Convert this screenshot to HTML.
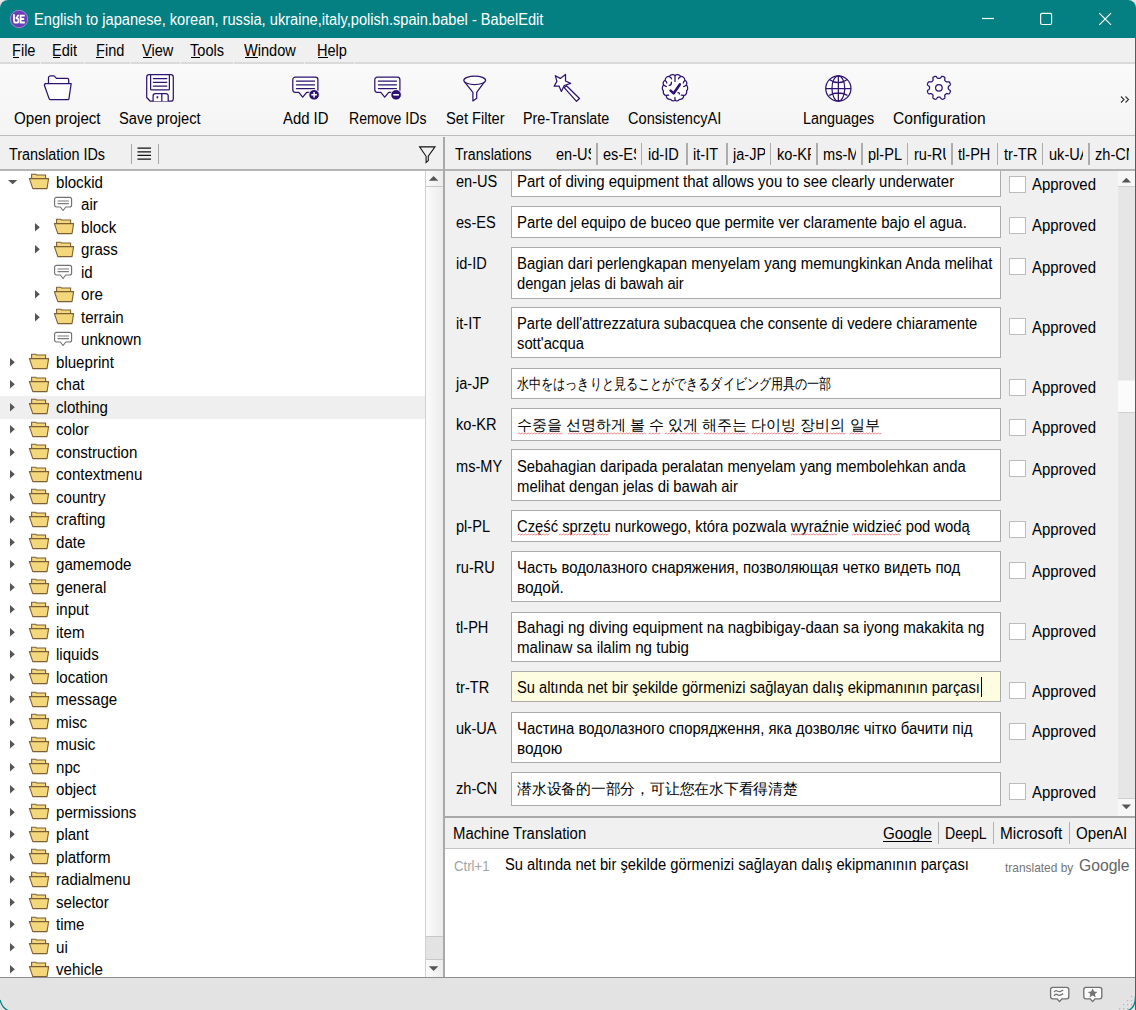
<!DOCTYPE html><html><head><meta charset="utf-8"><style>
*{box-sizing:border-box;margin:0;padding:0}
html,body{width:1136px;height:1010px;overflow:hidden;background:#e6e2e6}
body{font-family:"Liberation Sans",sans-serif;font-size:14.8px;color:#000;position:relative}
.a{position:absolute}
.t{position:absolute;white-space:nowrap;line-height:1.15}
.t{line-height:1}
#win{position:absolute;left:0;top:0;width:1136px;height:1010px;border-radius:8px 8px 0 0;overflow:hidden;background:#f0f0f0}
svg{position:absolute;overflow:visible}
</style></head><body><div id="win">
<div class="a" style="left:0;top:0;width:1136px;height:38px;background:#048083"></div>
<svg style="left:0;top:0" width="40" height="38"><circle cx="19" cy="19" r="8.7" fill="#6a3fb5" stroke="#b592e6" stroke-width="0.8"/><path d="M14 15V20.4a2.3 2.3 0 1 0 2.3-2.3M16.4 18.3L18.2 15.4" fill="none" stroke="#fff" stroke-width="1.8" stroke-linecap="round"/><path d="M24.8 15.6H20.6V22.5H24.8M20.6 19H24.2" fill="none" stroke="#fff" stroke-width="1.8"/></svg>
<div class="t" style="left:33.99px;top:12px;font-size:16px;color:#fff;transform:scaleX(0.914);transform-origin:0 0;">English to japanese, korean, russia, ukraine,italy,polish.spain.babel - BabelEdit</div>
<svg style="left:970px;top:0" width="166" height="38"><path d="M12 18.5h12" stroke="#fff" stroke-width="1.2"/><rect x="70.6" y="13.3" width="11" height="11.2" rx="1.5" fill="none" stroke="#fff" stroke-width="1.2"/><path d="M129.3 13.2l11.7 11.7M141 13.2l-11.7 11.7" stroke="#fff" stroke-width="1.2"/></svg>
<div class="a" style="left:0;top:38px;width:1136px;height:26px;background:#f0f0f0"></div>
<div class="a" style="left:0px;top:62px;width:39.5px;height:2px;background:#dadada"></div>
<div class="a" style="left:40.5px;top:62px;width:43.0px;height:2px;background:#dadada"></div>
<div class="a" style="left:84.5px;top:62px;width:45.0px;height:2px;background:#dadada"></div>
<div class="a" style="left:130.5px;top:62px;width:49.0px;height:2px;background:#dadada"></div>
<div class="a" style="left:180.5px;top:62px;width:52.0px;height:2px;background:#dadada"></div>
<div class="a" style="left:233.5px;top:62px;width:70.5px;height:2px;background:#dadada"></div>
<div class="a" style="left:305px;top:62px;width:48.5px;height:2px;background:#dadada"></div>
<div class="a" style="left:354.5px;top:62px;width:781.5px;height:2px;background:#dadada"></div>
<div class="t" style="left:12.29px;top:43px;font-size:16px;color:#000;transform:scaleX(0.91);transform-origin:0 0;">File</div>
<div class="a" style="left:13.2px;top:57.3px;width:5.8px;height:1px;background:#000"></div>
<div class="t" style="left:52.39px;top:43px;font-size:16px;color:#000;transform:scaleX(0.91);transform-origin:0 0;">Edit</div>
<div class="a" style="left:53.3px;top:57.3px;width:6.4px;height:1px;background:#000"></div>
<div class="t" style="left:95.69px;top:43px;font-size:16px;color:#000;transform:scaleX(0.91);transform-origin:0 0;">Find</div>
<div class="a" style="left:96.3px;top:57.3px;width:7.7px;height:1px;background:#000"></div>
<div class="t" style="left:141.89px;top:43px;font-size:16px;color:#000;transform:scaleX(0.91);transform-origin:0 0;">View</div>
<div class="a" style="left:142.8px;top:57.3px;width:9.7px;height:1px;background:#000"></div>
<div class="t" style="left:190.49px;top:43px;font-size:16px;color:#000;transform:scaleX(0.91);transform-origin:0 0;">Tools</div>
<div class="a" style="left:191.4px;top:57.3px;width:8.6px;height:1px;background:#000"></div>
<div class="t" style="left:244.19px;top:43px;font-size:16px;color:#000;transform:scaleX(0.91);transform-origin:0 0;">Window</div>
<div class="a" style="left:245.1px;top:57.3px;width:13.4px;height:1px;background:#000"></div>
<div class="t" style="left:317.09px;top:43px;font-size:16px;color:#000;transform:scaleX(0.91);transform-origin:0 0;">Help</div>
<div class="a" style="left:318px;top:57.3px;width:9.5px;height:1px;background:#000"></div>
<div class="a" style="left:0;top:64px;width:1136px;height:71px;background:linear-gradient(#fafafa,#f4f4f4)"></div>
<div class="a" style="left:0;top:135px;width:1136px;height:1px;background:#bdbdbd"></div>
<svg style="left:0px;top:0px" width="1136" height="1010" viewBox="0 0 1136 1010"><g transform="translate(40,70)" fill="#fff" stroke="#2e1270" stroke-width="1.25" stroke-linejoin="round"><path d="M8.5 13.5V7.8a2.2 2.2 0 0 1 2.2-2h3.4l2.4 2.6h10.8a1.4 1.4 0 0 1 1.4 1.4v3.7"/><path d="M4.4 15.2a1.6 1.6 0 0 1 1.6-1.7h25.2l-2.3 15.4a0.9 0.9 0 0 1-0.9 0.8H10.6a1.6 1.6 0 0 1-1.5-1.1z"/></g><g transform="translate(140,70)" fill="#fff" stroke="#2e1270" stroke-width="1.25" stroke-linejoin="round"><path d="M9.2 4.6H30.8a2.5 2.5 0 0 1 2.5 2.5V28.7a2.5 2.5 0 0 1-2.5 2.5H10.3L6.7 27.5V7.1a2.5 2.5 0 0 1 2.5-2.5z"/><path d="M10.6 4.6H29.4V19.3a0.5 0.5 0 0 1-0.5 0.5H11.1a0.5 0.5 0 0 1-0.5-0.5z"/><path d="M13.4 8.5H26.8M13.4 12.3H26.8M13.4 16.2H26.8" stroke-linecap="round"/><path d="M13.1 31.2V25.8a2.2 2.2 0 0 1 2.2-2.2H26a2.2 2.2 0 0 1 2.2 2.2V31.2M21.8 23.6V31.2"/><rect x="16.6" y="26.2" width="1.6" height="2.2" fill="#2e1270" stroke="none"/></g><g transform="translate(288,72)" fill="#fff" stroke="#2e1270" stroke-width="1.25" stroke-linejoin="round"><path d="M7.3 5.2H27.4a2.5 2.5 0 0 1 2.5 2.5V17.8a2.5 2.5 0 0 1-2.5 2.5H18.7L14.7 25.2L10.8 20.3H7.3a2.5 2.5 0 0 1-2.5-2.5V7.7a2.5 2.5 0 0 1 2.5-2.5z"/><path d="M8.4 9.2H26.5M8.4 12.8H26.5M8.4 16.5H26.5" stroke-linecap="round"/><circle cx="26.1" cy="22.8" r="5.3" fill="#2e1270" stroke="#fff" stroke-width="0.9"/><path d="M26.1 20v5.6M23.3 22.8h5.6" stroke="#fff" stroke-width="1.5"/></g><g transform="translate(370,72)" fill="#fff" stroke="#2e1270" stroke-width="1.25" stroke-linejoin="round"><path d="M7.3 5.2H27.4a2.5 2.5 0 0 1 2.5 2.5V17.8a2.5 2.5 0 0 1-2.5 2.5H18.7L14.7 25.2L10.8 20.3H7.3a2.5 2.5 0 0 1-2.5-2.5V7.7a2.5 2.5 0 0 1 2.5-2.5z"/><path d="M8.4 9.2H26.5M8.4 12.8H26.5M8.4 16.5H26.5" stroke-linecap="round"/><circle cx="26.1" cy="22.8" r="5.3" fill="#2e1270" stroke="#fff" stroke-width="0.9"/><path d="M23.3 22.8h5.6" stroke="#fff" stroke-width="1.6"/></g><g transform="translate(458,70)" fill="#fff" stroke="#2e1270" stroke-width="1.25" stroke-linejoin="round"><path d="M6.2 11.4L14.9 22.4V30.9L18.7 28.2V22.4L26.6 11.6"/><ellipse cx="16.7" cy="10.3" rx="10.9" ry="4.2"/></g><g transform="translate(548,70)" fill="#fff" stroke="#2e1270" stroke-width="1.25" stroke-linejoin="round"><path d="M16.2 17.6L18.5 15.7L31.5 28.5L28.5 31.3Z"/><path d="M7.3 5.7 L12.3 8.4 L17.5 4.45 L17.5 11 L22.6 13.4 L16.2 15.5 L13.4 21.4 L11 16 L6.1 16.2 L8.9 11.4Z"/></g><g transform="translate(657,70)" fill="#fff" stroke="#2e1270" stroke-width="1.25" stroke-linejoin="round" stroke-linecap="round"><path d="M18 5.6C16.5 4 13.6 4.2 12.4 6.4C10 6.2 8.2 8 8.2 10.2C6.4 11 5.9 13.2 6.6 15C5 16.4 4.9 19.4 6.4 20.8C6 23.2 7.3 25 9.2 25.6C9.6 28.2 11.6 29.6 13.6 29.4C14.8 31.4 17 31.4 18 30C19 31.4 21.2 31.4 22.4 29.4C24.4 29.6 26.4 28.2 26.8 25.6C28.7 25 30 23.2 29.6 20.8C31.1 19.4 31 16.4 29.4 15C30.1 13.2 29.6 11 27.8 10.2C27.8 8 26 6.2 23.6 6.4C22.4 4.2 19.5 4 18 5.6Z"/><path d="M18 6V11.5M18 27.4V29.6M12.6 6.8C13.6 7.2 14.4 8 14.6 8.8M23.4 6.8C22.4 7.2 21.6 8 21.4 8.8M8.2 10.4C9 11 9.6 12 9.8 13M27.8 10.4C27 11 26.4 12 26.2 13M14.4 12.2C14.6 14 13.8 15.2 12.2 15.4M6.6 15C7.8 16 8.8 16.6 9.4 16.6M29.4 15C28.2 16 27.2 16.6 26.6 16.6M9.4 25.4C10.2 25 11 25 11.8 25M26.6 25.4C25.8 25 25 25 24.2 25M21 22.6C22 22.4 22.6 23 22.4 24"/><path d="M13.6 20.6L16.6 23.4L22.8 14.4" stroke-width="2.6"/></g><g transform="translate(820,70)" fill="none" stroke="#2e1270" stroke-width="1.25"><circle cx="18.35" cy="18.5" r="12.6" fill="#fff"/><ellipse cx="18.35" cy="18.5" rx="6.4" ry="12.6"/><path d="M18.35 5.9V31.1M5.75 18.5H30.95M9.4 9.4Q18.35 16 27.3 9.4M9.2 25.4Q18.35 20.6 27.5 25.4"/></g><g transform="translate(920,70)" fill="#fff" stroke="#2e1270" stroke-width="1.25"><path d="M18.90 8.45 L19.14 8.45 L19.39 8.45 L19.64 8.44 L19.89 8.40 L20.15 8.29 L20.45 8.04 L20.79 7.59 L21.19 7.03 L21.59 6.60 L21.96 6.39 L22.29 6.35 L22.61 6.38 L22.92 6.46 L23.22 6.55 L23.51 6.67 L23.80 6.79 L24.08 6.94 L24.35 7.10 L24.60 7.30 L24.80 7.57 L24.92 7.98 L24.90 8.56 L24.78 9.24 L24.71 9.81 L24.74 10.19 L24.85 10.45 L25.00 10.66 L25.17 10.84 L25.34 11.02 L25.51 11.19 L25.68 11.36 L25.86 11.53 L26.04 11.70 L26.25 11.85 L26.51 11.96 L26.89 11.99 L27.46 11.92 L28.14 11.80 L28.72 11.78 L29.13 11.90 L29.40 12.10 L29.60 12.35 L29.76 12.62 L29.91 12.90 L30.03 13.19 L30.15 13.48 L30.24 13.78 L30.32 14.09 L30.35 14.41 L30.31 14.74 L30.10 15.11 L29.67 15.51 L29.11 15.91 L28.66 16.25 L28.41 16.55 L28.30 16.81 L28.26 17.06 L28.25 17.31 L28.25 17.56 L28.25 17.80 L28.25 18.04 L28.25 18.29 L28.26 18.54 L28.30 18.79 L28.41 19.05 L28.66 19.35 L29.11 19.69 L29.67 20.09 L30.10 20.49 L30.31 20.86 L30.35 21.19 L30.32 21.51 L30.24 21.82 L30.15 22.12 L30.03 22.41 L29.91 22.70 L29.76 22.98 L29.60 23.25 L29.40 23.50 L29.13 23.70 L28.72 23.82 L28.14 23.80 L27.46 23.68 L26.89 23.61 L26.51 23.64 L26.25 23.75 L26.04 23.90 L25.86 24.07 L25.68 24.24 L25.51 24.41 L25.34 24.58 L25.17 24.76 L25.00 24.94 L24.85 25.15 L24.74 25.41 L24.71 25.79 L24.78 26.36 L24.90 27.04 L24.92 27.62 L24.80 28.03 L24.60 28.30 L24.35 28.50 L24.08 28.66 L23.80 28.81 L23.51 28.93 L23.22 29.05 L22.92 29.14 L22.61 29.22 L22.29 29.25 L21.96 29.21 L21.59 29.00 L21.19 28.57 L20.79 28.01 L20.45 27.56 L20.15 27.31 L19.89 27.20 L19.64 27.16 L19.39 27.15 L19.14 27.15 L18.90 27.15 L18.66 27.15 L18.41 27.15 L18.16 27.16 L17.91 27.20 L17.65 27.31 L17.35 27.56 L17.01 28.01 L16.61 28.57 L16.21 29.00 L15.84 29.21 L15.51 29.25 L15.19 29.22 L14.88 29.14 L14.58 29.05 L14.29 28.93 L14.00 28.81 L13.72 28.66 L13.45 28.50 L13.20 28.30 L13.00 28.03 L12.88 27.62 L12.90 27.04 L13.02 26.36 L13.09 25.79 L13.06 25.41 L12.95 25.15 L12.80 24.94 L12.63 24.76 L12.46 24.58 L12.29 24.41 L12.12 24.24 L11.94 24.07 L11.76 23.90 L11.55 23.75 L11.29 23.64 L10.91 23.61 L10.34 23.68 L9.66 23.80 L9.08 23.82 L8.67 23.70 L8.40 23.50 L8.20 23.25 L8.04 22.98 L7.89 22.70 L7.77 22.41 L7.65 22.12 L7.56 21.82 L7.48 21.51 L7.45 21.19 L7.49 20.86 L7.70 20.49 L8.13 20.09 L8.69 19.69 L9.14 19.35 L9.39 19.05 L9.50 18.79 L9.54 18.54 L9.55 18.29 L9.55 18.04 L9.55 17.80 L9.55 17.56 L9.55 17.31 L9.54 17.06 L9.50 16.81 L9.39 16.55 L9.14 16.25 L8.69 15.91 L8.13 15.51 L7.70 15.11 L7.49 14.74 L7.45 14.41 L7.48 14.09 L7.56 13.78 L7.65 13.48 L7.77 13.19 L7.89 12.90 L8.04 12.62 L8.20 12.35 L8.40 12.10 L8.67 11.90 L9.08 11.78 L9.66 11.80 L10.34 11.92 L10.91 11.99 L11.29 11.96 L11.55 11.85 L11.76 11.70 L11.94 11.53 L12.12 11.36 L12.29 11.19 L12.46 11.02 L12.63 10.84 L12.80 10.66 L12.95 10.45 L13.06 10.19 L13.09 9.81 L13.02 9.24 L12.90 8.56 L12.88 7.98 L13.00 7.57 L13.20 7.30 L13.45 7.10 L13.72 6.94 L14.00 6.79 L14.29 6.67 L14.58 6.55 L14.88 6.46 L15.19 6.38 L15.51 6.35 L15.84 6.39 L16.21 6.60 L16.61 7.03 L17.01 7.59 L17.35 8.04 L17.65 8.29 L17.91 8.40 L18.16 8.44 L18.41 8.45 L18.66 8.45 L18.90 8.45Z"/><circle cx="18.9" cy="17.8" r="3.3"/></g><path d="M1121 96.5l3 3-3 3M1125.5 96.5l3 3-3 3" fill="none" stroke="#333" stroke-width="1.1"/></svg>
<div class="t" style="left:13.55px;top:111px;font-size:16px;color:#000;transform:scaleX(0.945);transform-origin:0 0;">Open project</div>
<div class="t" style="left:119.08px;top:111px;font-size:16px;color:#000;transform:scaleX(0.917);transform-origin:0 0;">Save project</div>
<div class="t" style="left:283.37px;top:111px;font-size:16px;color:#000;transform:scaleX(0.93);transform-origin:0 0;">Add ID</div>
<div class="t" style="left:348.92px;top:111px;font-size:16px;color:#000;transform:scaleX(0.88);transform-origin:0 0;">Remove IDs</div>
<div class="t" style="left:445.69px;top:111px;font-size:16px;color:#000;transform:scaleX(0.914);transform-origin:0 0;">Set Filter</div>
<div class="t" style="left:523.11px;top:111px;font-size:16px;color:#000;transform:scaleX(0.895);transform-origin:0 0;">Pre-Translate</div>
<div class="t" style="left:627.89px;top:111px;font-size:16px;color:#000;transform:scaleX(0.912);transform-origin:0 0;">ConsistencyAI</div>
<div class="t" style="left:803.10px;top:111px;font-size:16px;color:#000;transform:scaleX(0.9);transform-origin:0 0;">Languages</div>
<div class="t" style="left:893.03px;top:111px;font-size:16px;color:#000;transform:scaleX(0.973);transform-origin:0 0;">Configuration</div>
<div class="a" style="left:0;top:136px;width:1136px;height:34px;background:#f0f0f0"></div>
<div class="t" style="left:9.10px;top:147px;font-size:16px;color:#000;transform:scaleX(0.897);transform-origin:0 0;">Translation IDs</div>
<div class="a" style="left:131px;top:144px;width:1px;height:20px;background:#a8a8a8"></div>
<div class="a" style="left:158px;top:144px;width:1px;height:20px;background:#a8a8a8"></div>
<svg style="left:0px;top:0px" width="1136" height="1010" viewBox="0 0 1136 1010"><path d="M137.5 148.2h13.5M137.5 151.8h13.5M137.5 155.4h13.5M137.5 159.2h13.5" stroke="#111" stroke-width="1.2"/><path d="M419.6 146.9H435L428.3 156.3V160.6L426.1 162.5V156.3Z" fill="none" stroke="#111" stroke-width="1.1" stroke-linejoin="miter"/></svg>
<div class="a" style="left:0;top:169px;width:444px;height:2px;background:#b4b4b4"></div>
<div class="a" style="left:0;top:171px;width:426px;height:806px;background:#fff;overflow:hidden" id="tree">
<svg style="left:7.8px;top:8.5px" width="10" height="5"><path d="M0 0H9.3L4.65 4.2Z" fill="#555"/></svg>
<svg style="left:29px;top:2.2px" width="22" height="18" viewBox="0 0 22 18"><path d="M2.6 6V1.2H6.6L7.4 2H16.6V6" fill="#f4d77b" stroke="#7d5f36" stroke-width="1.1"/><path d="M0.4 5.6H19.6L18 15.6H3.8Z" fill="#f4d77b" stroke="#7d5f36" stroke-width="1.1" stroke-linejoin="round"/></svg>
<div class="t" style="left:55.96px;top:4px;font-size:16px;color:#000;transform:scaleX(0.942);transform-origin:0 0;">blockid</div>
<svg style="left:54px;top:25.0px" width="22" height="18" viewBox="0 0 22 18"><path d="M2.6 1.3H15.6a2 2 0 0 1 2 2V9a2 2 0 0 1-2 2H11.8L9.1 14.5L6.3 11H2.6a2 2 0 0 1-2-2V3.3a2 2 0 0 1 2-2Z" fill="#fff" stroke="#727272" stroke-width="1.15" stroke-linejoin="round"/><path d="M3.9 5.05H14.5M3.9 7.6H14.5" stroke="#7a7a7a" stroke-width="1.1" stroke-linecap="round"/></svg>
<div class="t" style="left:80.56px;top:26px;font-size:16px;color:#000;transform:scaleX(0.942);transform-origin:0 0;">air</div>
<svg style="left:35px;top:51.5px" width="6" height="9"><path d="M0 0L4.8 4.2L0 8.4Z" fill="#555"/></svg>
<svg style="left:54px;top:47.2px" width="22" height="18" viewBox="0 0 22 18"><path d="M2.6 6V1.2H6.6L7.4 2H16.6V6" fill="#f4d77b" stroke="#7d5f36" stroke-width="1.1"/><path d="M0.4 5.6H19.6L18 15.6H3.8Z" fill="#f4d77b" stroke="#7d5f36" stroke-width="1.1" stroke-linejoin="round"/></svg>
<div class="t" style="left:80.56px;top:49px;font-size:16px;color:#000;transform:scaleX(0.942);transform-origin:0 0;">block</div>
<svg style="left:35px;top:74.0px" width="6" height="9"><path d="M0 0L4.8 4.2L0 8.4Z" fill="#555"/></svg>
<svg style="left:54px;top:69.7px" width="22" height="18" viewBox="0 0 22 18"><path d="M2.6 6V1.2H6.6L7.4 2H16.6V6" fill="#f4d77b" stroke="#7d5f36" stroke-width="1.1"/><path d="M0.4 5.6H19.6L18 15.6H3.8Z" fill="#f4d77b" stroke="#7d5f36" stroke-width="1.1" stroke-linejoin="round"/></svg>
<div class="t" style="left:80.56px;top:71px;font-size:16px;color:#000;transform:scaleX(0.942);transform-origin:0 0;">grass</div>
<svg style="left:54px;top:92.5px" width="22" height="18" viewBox="0 0 22 18"><path d="M2.6 1.3H15.6a2 2 0 0 1 2 2V9a2 2 0 0 1-2 2H11.8L9.1 14.5L6.3 11H2.6a2 2 0 0 1-2-2V3.3a2 2 0 0 1 2-2Z" fill="#fff" stroke="#727272" stroke-width="1.15" stroke-linejoin="round"/><path d="M3.9 5.05H14.5M3.9 7.6H14.5" stroke="#7a7a7a" stroke-width="1.1" stroke-linecap="round"/></svg>
<div class="t" style="left:80.56px;top:94px;font-size:16px;color:#000;transform:scaleX(0.942);transform-origin:0 0;">id</div>
<svg style="left:35px;top:119.0px" width="6" height="9"><path d="M0 0L4.8 4.2L0 8.4Z" fill="#555"/></svg>
<svg style="left:54px;top:114.7px" width="22" height="18" viewBox="0 0 22 18"><path d="M2.6 6V1.2H6.6L7.4 2H16.6V6" fill="#f4d77b" stroke="#7d5f36" stroke-width="1.1"/><path d="M0.4 5.6H19.6L18 15.6H3.8Z" fill="#f4d77b" stroke="#7d5f36" stroke-width="1.1" stroke-linejoin="round"/></svg>
<div class="t" style="left:80.56px;top:116px;font-size:16px;color:#000;transform:scaleX(0.942);transform-origin:0 0;">ore</div>
<svg style="left:35px;top:141.5px" width="6" height="9"><path d="M0 0L4.8 4.2L0 8.4Z" fill="#555"/></svg>
<svg style="left:54px;top:137.2px" width="22" height="18" viewBox="0 0 22 18"><path d="M2.6 6V1.2H6.6L7.4 2H16.6V6" fill="#f4d77b" stroke="#7d5f36" stroke-width="1.1"/><path d="M0.4 5.6H19.6L18 15.6H3.8Z" fill="#f4d77b" stroke="#7d5f36" stroke-width="1.1" stroke-linejoin="round"/></svg>
<div class="t" style="left:80.56px;top:139px;font-size:16px;color:#000;transform:scaleX(0.942);transform-origin:0 0;">terrain</div>
<svg style="left:54px;top:160.0px" width="22" height="18" viewBox="0 0 22 18"><path d="M2.6 1.3H15.6a2 2 0 0 1 2 2V9a2 2 0 0 1-2 2H11.8L9.1 14.5L6.3 11H2.6a2 2 0 0 1-2-2V3.3a2 2 0 0 1 2-2Z" fill="#fff" stroke="#727272" stroke-width="1.15" stroke-linejoin="round"/><path d="M3.9 5.05H14.5M3.9 7.6H14.5" stroke="#7a7a7a" stroke-width="1.1" stroke-linecap="round"/></svg>
<div class="t" style="left:80.56px;top:161px;font-size:16px;color:#000;transform:scaleX(0.942);transform-origin:0 0;">unknown</div>
<svg style="left:10px;top:186.5px" width="6" height="9"><path d="M0 0L4.8 4.2L0 8.4Z" fill="#555"/></svg>
<svg style="left:29px;top:182.2px" width="22" height="18" viewBox="0 0 22 18"><path d="M2.6 6V1.2H6.6L7.4 2H16.6V6" fill="#f4d77b" stroke="#7d5f36" stroke-width="1.1"/><path d="M0.4 5.6H19.6L18 15.6H3.8Z" fill="#f4d77b" stroke="#7d5f36" stroke-width="1.1" stroke-linejoin="round"/></svg>
<div class="t" style="left:55.96px;top:184px;font-size:16px;color:#000;transform:scaleX(0.942);transform-origin:0 0;">blueprint</div>
<svg style="left:10px;top:209.0px" width="6" height="9"><path d="M0 0L4.8 4.2L0 8.4Z" fill="#555"/></svg>
<svg style="left:29px;top:204.7px" width="22" height="18" viewBox="0 0 22 18"><path d="M2.6 6V1.2H6.6L7.4 2H16.6V6" fill="#f4d77b" stroke="#7d5f36" stroke-width="1.1"/><path d="M0.4 5.6H19.6L18 15.6H3.8Z" fill="#f4d77b" stroke="#7d5f36" stroke-width="1.1" stroke-linejoin="round"/></svg>
<div class="t" style="left:55.96px;top:206px;font-size:16px;color:#000;transform:scaleX(0.942);transform-origin:0 0;">chat</div>
<div class="a" style="left:0;top:225.0px;width:426px;height:22.5px;background:#efefef"></div>
<svg style="left:10px;top:231.5px" width="6" height="9"><path d="M0 0L4.8 4.2L0 8.4Z" fill="#555"/></svg>
<svg style="left:29px;top:227.2px" width="22" height="18" viewBox="0 0 22 18"><path d="M2.6 6V1.2H6.6L7.4 2H16.6V6" fill="#f4d77b" stroke="#7d5f36" stroke-width="1.1"/><path d="M0.4 5.6H19.6L18 15.6H3.8Z" fill="#f4d77b" stroke="#7d5f36" stroke-width="1.1" stroke-linejoin="round"/></svg>
<div class="t" style="left:55.96px;top:229px;font-size:16px;color:#000;transform:scaleX(0.942);transform-origin:0 0;">clothing</div>
<svg style="left:10px;top:254.0px" width="6" height="9"><path d="M0 0L4.8 4.2L0 8.4Z" fill="#555"/></svg>
<svg style="left:29px;top:249.7px" width="22" height="18" viewBox="0 0 22 18"><path d="M2.6 6V1.2H6.6L7.4 2H16.6V6" fill="#f4d77b" stroke="#7d5f36" stroke-width="1.1"/><path d="M0.4 5.6H19.6L18 15.6H3.8Z" fill="#f4d77b" stroke="#7d5f36" stroke-width="1.1" stroke-linejoin="round"/></svg>
<div class="t" style="left:55.96px;top:251px;font-size:16px;color:#000;transform:scaleX(0.942);transform-origin:0 0;">color</div>
<svg style="left:10px;top:276.5px" width="6" height="9"><path d="M0 0L4.8 4.2L0 8.4Z" fill="#555"/></svg>
<svg style="left:29px;top:272.2px" width="22" height="18" viewBox="0 0 22 18"><path d="M2.6 6V1.2H6.6L7.4 2H16.6V6" fill="#f4d77b" stroke="#7d5f36" stroke-width="1.1"/><path d="M0.4 5.6H19.6L18 15.6H3.8Z" fill="#f4d77b" stroke="#7d5f36" stroke-width="1.1" stroke-linejoin="round"/></svg>
<div class="t" style="left:55.96px;top:274px;font-size:16px;color:#000;transform:scaleX(0.942);transform-origin:0 0;">construction</div>
<svg style="left:10px;top:299.0px" width="6" height="9"><path d="M0 0L4.8 4.2L0 8.4Z" fill="#555"/></svg>
<svg style="left:29px;top:294.7px" width="22" height="18" viewBox="0 0 22 18"><path d="M2.6 6V1.2H6.6L7.4 2H16.6V6" fill="#f4d77b" stroke="#7d5f36" stroke-width="1.1"/><path d="M0.4 5.6H19.6L18 15.6H3.8Z" fill="#f4d77b" stroke="#7d5f36" stroke-width="1.1" stroke-linejoin="round"/></svg>
<div class="t" style="left:55.96px;top:296px;font-size:16px;color:#000;transform:scaleX(0.942);transform-origin:0 0;">contextmenu</div>
<svg style="left:10px;top:321.5px" width="6" height="9"><path d="M0 0L4.8 4.2L0 8.4Z" fill="#555"/></svg>
<svg style="left:29px;top:317.2px" width="22" height="18" viewBox="0 0 22 18"><path d="M2.6 6V1.2H6.6L7.4 2H16.6V6" fill="#f4d77b" stroke="#7d5f36" stroke-width="1.1"/><path d="M0.4 5.6H19.6L18 15.6H3.8Z" fill="#f4d77b" stroke="#7d5f36" stroke-width="1.1" stroke-linejoin="round"/></svg>
<div class="t" style="left:55.96px;top:319px;font-size:16px;color:#000;transform:scaleX(0.942);transform-origin:0 0;">country</div>
<svg style="left:10px;top:344.0px" width="6" height="9"><path d="M0 0L4.8 4.2L0 8.4Z" fill="#555"/></svg>
<svg style="left:29px;top:339.7px" width="22" height="18" viewBox="0 0 22 18"><path d="M2.6 6V1.2H6.6L7.4 2H16.6V6" fill="#f4d77b" stroke="#7d5f36" stroke-width="1.1"/><path d="M0.4 5.6H19.6L18 15.6H3.8Z" fill="#f4d77b" stroke="#7d5f36" stroke-width="1.1" stroke-linejoin="round"/></svg>
<div class="t" style="left:55.96px;top:341px;font-size:16px;color:#000;transform:scaleX(0.942);transform-origin:0 0;">crafting</div>
<svg style="left:10px;top:366.5px" width="6" height="9"><path d="M0 0L4.8 4.2L0 8.4Z" fill="#555"/></svg>
<svg style="left:29px;top:362.2px" width="22" height="18" viewBox="0 0 22 18"><path d="M2.6 6V1.2H6.6L7.4 2H16.6V6" fill="#f4d77b" stroke="#7d5f36" stroke-width="1.1"/><path d="M0.4 5.6H19.6L18 15.6H3.8Z" fill="#f4d77b" stroke="#7d5f36" stroke-width="1.1" stroke-linejoin="round"/></svg>
<div class="t" style="left:55.96px;top:364px;font-size:16px;color:#000;transform:scaleX(0.942);transform-origin:0 0;">date</div>
<svg style="left:10px;top:389.0px" width="6" height="9"><path d="M0 0L4.8 4.2L0 8.4Z" fill="#555"/></svg>
<svg style="left:29px;top:384.7px" width="22" height="18" viewBox="0 0 22 18"><path d="M2.6 6V1.2H6.6L7.4 2H16.6V6" fill="#f4d77b" stroke="#7d5f36" stroke-width="1.1"/><path d="M0.4 5.6H19.6L18 15.6H3.8Z" fill="#f4d77b" stroke="#7d5f36" stroke-width="1.1" stroke-linejoin="round"/></svg>
<div class="t" style="left:55.96px;top:386px;font-size:16px;color:#000;transform:scaleX(0.942);transform-origin:0 0;">gamemode</div>
<svg style="left:10px;top:411.5px" width="6" height="9"><path d="M0 0L4.8 4.2L0 8.4Z" fill="#555"/></svg>
<svg style="left:29px;top:407.2px" width="22" height="18" viewBox="0 0 22 18"><path d="M2.6 6V1.2H6.6L7.4 2H16.6V6" fill="#f4d77b" stroke="#7d5f36" stroke-width="1.1"/><path d="M0.4 5.6H19.6L18 15.6H3.8Z" fill="#f4d77b" stroke="#7d5f36" stroke-width="1.1" stroke-linejoin="round"/></svg>
<div class="t" style="left:55.96px;top:409px;font-size:16px;color:#000;transform:scaleX(0.942);transform-origin:0 0;">general</div>
<svg style="left:10px;top:434.0px" width="6" height="9"><path d="M0 0L4.8 4.2L0 8.4Z" fill="#555"/></svg>
<svg style="left:29px;top:429.7px" width="22" height="18" viewBox="0 0 22 18"><path d="M2.6 6V1.2H6.6L7.4 2H16.6V6" fill="#f4d77b" stroke="#7d5f36" stroke-width="1.1"/><path d="M0.4 5.6H19.6L18 15.6H3.8Z" fill="#f4d77b" stroke="#7d5f36" stroke-width="1.1" stroke-linejoin="round"/></svg>
<div class="t" style="left:55.96px;top:431px;font-size:16px;color:#000;transform:scaleX(0.942);transform-origin:0 0;">input</div>
<svg style="left:10px;top:456.5px" width="6" height="9"><path d="M0 0L4.8 4.2L0 8.4Z" fill="#555"/></svg>
<svg style="left:29px;top:452.2px" width="22" height="18" viewBox="0 0 22 18"><path d="M2.6 6V1.2H6.6L7.4 2H16.6V6" fill="#f4d77b" stroke="#7d5f36" stroke-width="1.1"/><path d="M0.4 5.6H19.6L18 15.6H3.8Z" fill="#f4d77b" stroke="#7d5f36" stroke-width="1.1" stroke-linejoin="round"/></svg>
<div class="t" style="left:55.96px;top:454px;font-size:16px;color:#000;transform:scaleX(0.942);transform-origin:0 0;">item</div>
<svg style="left:10px;top:479.0px" width="6" height="9"><path d="M0 0L4.8 4.2L0 8.4Z" fill="#555"/></svg>
<svg style="left:29px;top:474.7px" width="22" height="18" viewBox="0 0 22 18"><path d="M2.6 6V1.2H6.6L7.4 2H16.6V6" fill="#f4d77b" stroke="#7d5f36" stroke-width="1.1"/><path d="M0.4 5.6H19.6L18 15.6H3.8Z" fill="#f4d77b" stroke="#7d5f36" stroke-width="1.1" stroke-linejoin="round"/></svg>
<div class="t" style="left:55.96px;top:476px;font-size:16px;color:#000;transform:scaleX(0.942);transform-origin:0 0;">liquids</div>
<svg style="left:10px;top:501.5px" width="6" height="9"><path d="M0 0L4.8 4.2L0 8.4Z" fill="#555"/></svg>
<svg style="left:29px;top:497.2px" width="22" height="18" viewBox="0 0 22 18"><path d="M2.6 6V1.2H6.6L7.4 2H16.6V6" fill="#f4d77b" stroke="#7d5f36" stroke-width="1.1"/><path d="M0.4 5.6H19.6L18 15.6H3.8Z" fill="#f4d77b" stroke="#7d5f36" stroke-width="1.1" stroke-linejoin="round"/></svg>
<div class="t" style="left:55.96px;top:499px;font-size:16px;color:#000;transform:scaleX(0.942);transform-origin:0 0;">location</div>
<svg style="left:10px;top:524.0px" width="6" height="9"><path d="M0 0L4.8 4.2L0 8.4Z" fill="#555"/></svg>
<svg style="left:29px;top:519.7px" width="22" height="18" viewBox="0 0 22 18"><path d="M2.6 6V1.2H6.6L7.4 2H16.6V6" fill="#f4d77b" stroke="#7d5f36" stroke-width="1.1"/><path d="M0.4 5.6H19.6L18 15.6H3.8Z" fill="#f4d77b" stroke="#7d5f36" stroke-width="1.1" stroke-linejoin="round"/></svg>
<div class="t" style="left:55.96px;top:521px;font-size:16px;color:#000;transform:scaleX(0.942);transform-origin:0 0;">message</div>
<svg style="left:10px;top:546.5px" width="6" height="9"><path d="M0 0L4.8 4.2L0 8.4Z" fill="#555"/></svg>
<svg style="left:29px;top:542.2px" width="22" height="18" viewBox="0 0 22 18"><path d="M2.6 6V1.2H6.6L7.4 2H16.6V6" fill="#f4d77b" stroke="#7d5f36" stroke-width="1.1"/><path d="M0.4 5.6H19.6L18 15.6H3.8Z" fill="#f4d77b" stroke="#7d5f36" stroke-width="1.1" stroke-linejoin="round"/></svg>
<div class="t" style="left:55.96px;top:544px;font-size:16px;color:#000;transform:scaleX(0.942);transform-origin:0 0;">misc</div>
<svg style="left:10px;top:569.0px" width="6" height="9"><path d="M0 0L4.8 4.2L0 8.4Z" fill="#555"/></svg>
<svg style="left:29px;top:564.7px" width="22" height="18" viewBox="0 0 22 18"><path d="M2.6 6V1.2H6.6L7.4 2H16.6V6" fill="#f4d77b" stroke="#7d5f36" stroke-width="1.1"/><path d="M0.4 5.6H19.6L18 15.6H3.8Z" fill="#f4d77b" stroke="#7d5f36" stroke-width="1.1" stroke-linejoin="round"/></svg>
<div class="t" style="left:55.96px;top:566px;font-size:16px;color:#000;transform:scaleX(0.942);transform-origin:0 0;">music</div>
<svg style="left:10px;top:591.5px" width="6" height="9"><path d="M0 0L4.8 4.2L0 8.4Z" fill="#555"/></svg>
<svg style="left:29px;top:587.2px" width="22" height="18" viewBox="0 0 22 18"><path d="M2.6 6V1.2H6.6L7.4 2H16.6V6" fill="#f4d77b" stroke="#7d5f36" stroke-width="1.1"/><path d="M0.4 5.6H19.6L18 15.6H3.8Z" fill="#f4d77b" stroke="#7d5f36" stroke-width="1.1" stroke-linejoin="round"/></svg>
<div class="t" style="left:55.96px;top:589px;font-size:16px;color:#000;transform:scaleX(0.942);transform-origin:0 0;">npc</div>
<svg style="left:10px;top:614.0px" width="6" height="9"><path d="M0 0L4.8 4.2L0 8.4Z" fill="#555"/></svg>
<svg style="left:29px;top:609.7px" width="22" height="18" viewBox="0 0 22 18"><path d="M2.6 6V1.2H6.6L7.4 2H16.6V6" fill="#f4d77b" stroke="#7d5f36" stroke-width="1.1"/><path d="M0.4 5.6H19.6L18 15.6H3.8Z" fill="#f4d77b" stroke="#7d5f36" stroke-width="1.1" stroke-linejoin="round"/></svg>
<div class="t" style="left:55.96px;top:611px;font-size:16px;color:#000;transform:scaleX(0.942);transform-origin:0 0;">object</div>
<svg style="left:10px;top:636.5px" width="6" height="9"><path d="M0 0L4.8 4.2L0 8.4Z" fill="#555"/></svg>
<svg style="left:29px;top:632.2px" width="22" height="18" viewBox="0 0 22 18"><path d="M2.6 6V1.2H6.6L7.4 2H16.6V6" fill="#f4d77b" stroke="#7d5f36" stroke-width="1.1"/><path d="M0.4 5.6H19.6L18 15.6H3.8Z" fill="#f4d77b" stroke="#7d5f36" stroke-width="1.1" stroke-linejoin="round"/></svg>
<div class="t" style="left:55.96px;top:634px;font-size:16px;color:#000;transform:scaleX(0.942);transform-origin:0 0;">permissions</div>
<svg style="left:10px;top:659.0px" width="6" height="9"><path d="M0 0L4.8 4.2L0 8.4Z" fill="#555"/></svg>
<svg style="left:29px;top:654.7px" width="22" height="18" viewBox="0 0 22 18"><path d="M2.6 6V1.2H6.6L7.4 2H16.6V6" fill="#f4d77b" stroke="#7d5f36" stroke-width="1.1"/><path d="M0.4 5.6H19.6L18 15.6H3.8Z" fill="#f4d77b" stroke="#7d5f36" stroke-width="1.1" stroke-linejoin="round"/></svg>
<div class="t" style="left:55.96px;top:656px;font-size:16px;color:#000;transform:scaleX(0.942);transform-origin:0 0;">plant</div>
<svg style="left:10px;top:681.5px" width="6" height="9"><path d="M0 0L4.8 4.2L0 8.4Z" fill="#555"/></svg>
<svg style="left:29px;top:677.2px" width="22" height="18" viewBox="0 0 22 18"><path d="M2.6 6V1.2H6.6L7.4 2H16.6V6" fill="#f4d77b" stroke="#7d5f36" stroke-width="1.1"/><path d="M0.4 5.6H19.6L18 15.6H3.8Z" fill="#f4d77b" stroke="#7d5f36" stroke-width="1.1" stroke-linejoin="round"/></svg>
<div class="t" style="left:55.96px;top:679px;font-size:16px;color:#000;transform:scaleX(0.942);transform-origin:0 0;">platform</div>
<svg style="left:10px;top:704.0px" width="6" height="9"><path d="M0 0L4.8 4.2L0 8.4Z" fill="#555"/></svg>
<svg style="left:29px;top:699.7px" width="22" height="18" viewBox="0 0 22 18"><path d="M2.6 6V1.2H6.6L7.4 2H16.6V6" fill="#f4d77b" stroke="#7d5f36" stroke-width="1.1"/><path d="M0.4 5.6H19.6L18 15.6H3.8Z" fill="#f4d77b" stroke="#7d5f36" stroke-width="1.1" stroke-linejoin="round"/></svg>
<div class="t" style="left:55.96px;top:701px;font-size:16px;color:#000;transform:scaleX(0.942);transform-origin:0 0;">radialmenu</div>
<svg style="left:10px;top:726.5px" width="6" height="9"><path d="M0 0L4.8 4.2L0 8.4Z" fill="#555"/></svg>
<svg style="left:29px;top:722.2px" width="22" height="18" viewBox="0 0 22 18"><path d="M2.6 6V1.2H6.6L7.4 2H16.6V6" fill="#f4d77b" stroke="#7d5f36" stroke-width="1.1"/><path d="M0.4 5.6H19.6L18 15.6H3.8Z" fill="#f4d77b" stroke="#7d5f36" stroke-width="1.1" stroke-linejoin="round"/></svg>
<div class="t" style="left:55.96px;top:724px;font-size:16px;color:#000;transform:scaleX(0.942);transform-origin:0 0;">selector</div>
<svg style="left:10px;top:749.0px" width="6" height="9"><path d="M0 0L4.8 4.2L0 8.4Z" fill="#555"/></svg>
<svg style="left:29px;top:744.7px" width="22" height="18" viewBox="0 0 22 18"><path d="M2.6 6V1.2H6.6L7.4 2H16.6V6" fill="#f4d77b" stroke="#7d5f36" stroke-width="1.1"/><path d="M0.4 5.6H19.6L18 15.6H3.8Z" fill="#f4d77b" stroke="#7d5f36" stroke-width="1.1" stroke-linejoin="round"/></svg>
<div class="t" style="left:55.96px;top:746px;font-size:16px;color:#000;transform:scaleX(0.942);transform-origin:0 0;">time</div>
<svg style="left:10px;top:771.5px" width="6" height="9"><path d="M0 0L4.8 4.2L0 8.4Z" fill="#555"/></svg>
<svg style="left:29px;top:767.2px" width="22" height="18" viewBox="0 0 22 18"><path d="M2.6 6V1.2H6.6L7.4 2H16.6V6" fill="#f4d77b" stroke="#7d5f36" stroke-width="1.1"/><path d="M0.4 5.6H19.6L18 15.6H3.8Z" fill="#f4d77b" stroke="#7d5f36" stroke-width="1.1" stroke-linejoin="round"/></svg>
<div class="t" style="left:55.96px;top:769px;font-size:16px;color:#000;transform:scaleX(0.942);transform-origin:0 0;">ui</div>
<svg style="left:10px;top:794.0px" width="6" height="9"><path d="M0 0L4.8 4.2L0 8.4Z" fill="#555"/></svg>
<svg style="left:29px;top:789.7px" width="22" height="18" viewBox="0 0 22 18"><path d="M2.6 6V1.2H6.6L7.4 2H16.6V6" fill="#f4d77b" stroke="#7d5f36" stroke-width="1.1"/><path d="M0.4 5.6H19.6L18 15.6H3.8Z" fill="#f4d77b" stroke="#7d5f36" stroke-width="1.1" stroke-linejoin="round"/></svg>
<div class="t" style="left:55.96px;top:791px;font-size:16px;color:#000;transform:scaleX(0.942);transform-origin:0 0;">vehicle</div>
</div>
<div class="a" style="left:425px;top:171px;width:18px;height:806px;background:linear-gradient(90deg,#fbfbfb,#ececec);border-left:1px solid #cfcfcf"></div>
<div class="a" style="left:426px;top:186px;width:17px;height:1px;background:#c8c8c8"></div>
<div class="a" style="left:426px;top:936px;width:17px;height:23.5px;background:#e3e3e3;border-top:1px solid #c8c8c8;border-bottom:1px solid #c8c8c8"></div>
<svg style="left:0px;top:0px" width="1136" height="1010" viewBox="0 0 1136 1010"><path d="M428.9 180.8H438.3L433.6 176.1Z" fill="#555"/><path d="M428.9 966.2H438.3L433.6 970.9Z" fill="#555"/></svg>
<div class="a" style="left:443px;top:137px;width:2px;height:840px;background:#a9a9a9"></div>
<div class="t" style="left:454.92px;top:147px;font-size:16px;color:#000;transform:scaleX(0.885);transform-origin:0 0;">Translations</div>
<div class="a" style="left:556.4px;top:140px;width:34.9px;height:28px;overflow:hidden"><div class="t" style="left:0;top:7px;font-size:16px;transform:scaleX(0.91);transform-origin:0 0">en-US</div></div>
<div class="a" style="left:596.05px;top:143px;width:1.5px;height:21.5px;background:#acacac"></div>
<div class="a" style="left:603.0px;top:140px;width:33.2px;height:28px;overflow:hidden"><div class="t" style="left:0;top:7px;font-size:16px;transform:scaleX(0.91);transform-origin:0 0">es-ES</div></div>
<div class="a" style="left:640.95px;top:143px;width:1.5px;height:21.5px;background:#acacac"></div>
<div class="a" style="left:647.9px;top:140px;width:33.4px;height:28px;overflow:hidden"><div class="t" style="left:0;top:7px;font-size:16px;transform:scaleX(0.91);transform-origin:0 0">id-ID</div></div>
<div class="a" style="left:686.05px;top:143px;width:1.5px;height:21.5px;background:#acacac"></div>
<div class="a" style="left:693.0px;top:140px;width:28.5px;height:28px;overflow:hidden"><div class="t" style="left:0;top:7px;font-size:16px;transform:scaleX(0.91);transform-origin:0 0">it-IT</div></div>
<div class="a" style="left:726.25px;top:143px;width:1.5px;height:21.5px;background:#acacac"></div>
<div class="a" style="left:733.2px;top:140px;width:31.8px;height:28px;overflow:hidden"><div class="t" style="left:0;top:7px;font-size:16px;transform:scaleX(0.91);transform-origin:0 0">ja-JP</div></div>
<div class="a" style="left:769.75px;top:143px;width:1.5px;height:21.5px;background:#acacac"></div>
<div class="a" style="left:776.7px;top:140px;width:34.8px;height:28px;overflow:hidden"><div class="t" style="left:0;top:7px;font-size:16px;transform:scaleX(0.91);transform-origin:0 0">ko-KR</div></div>
<div class="a" style="left:816.25px;top:143px;width:1.5px;height:21.5px;background:#acacac"></div>
<div class="a" style="left:823.2px;top:140px;width:33.3px;height:28px;overflow:hidden"><div class="t" style="left:0;top:7px;font-size:16px;transform:scaleX(0.91);transform-origin:0 0">ms-MY</div></div>
<div class="a" style="left:861.25px;top:143px;width:1.5px;height:21.5px;background:#acacac"></div>
<div class="a" style="left:868.2px;top:140px;width:33.7px;height:28px;overflow:hidden"><div class="t" style="left:0;top:7px;font-size:16px;transform:scaleX(0.91);transform-origin:0 0">pl-PL</div></div>
<div class="a" style="left:906.65px;top:143px;width:1.5px;height:21.5px;background:#acacac"></div>
<div class="a" style="left:913.6px;top:140px;width:32.9px;height:28px;overflow:hidden"><div class="t" style="left:0;top:7px;font-size:16px;transform:scaleX(0.91);transform-origin:0 0">ru-RU</div></div>
<div class="a" style="left:951.25px;top:143px;width:1.5px;height:21.5px;background:#acacac"></div>
<div class="a" style="left:958.2px;top:140px;width:33.7px;height:28px;overflow:hidden"><div class="t" style="left:0;top:7px;font-size:16px;transform:scaleX(0.91);transform-origin:0 0">tl-PH</div></div>
<div class="a" style="left:996.65px;top:143px;width:1.5px;height:21.5px;background:#acacac"></div>
<div class="a" style="left:1003.6px;top:140px;width:33.3px;height:28px;overflow:hidden"><div class="t" style="left:0;top:7px;font-size:16px;transform:scaleX(0.91);transform-origin:0 0">tr-TR</div></div>
<div class="a" style="left:1041.65px;top:143px;width:1.5px;height:21.5px;background:#acacac"></div>
<div class="a" style="left:1048.6px;top:140px;width:34.7px;height:28px;overflow:hidden"><div class="t" style="left:0;top:7px;font-size:16px;transform:scaleX(0.91);transform-origin:0 0">uk-UA</div></div>
<div class="a" style="left:1088.05px;top:143px;width:1.5px;height:21.5px;background:#acacac"></div>
<div class="a" style="left:1095.0px;top:140px;width:33.5px;height:28px;overflow:hidden"><div class="t" style="left:0;top:7px;font-size:16px;transform:scaleX(0.91);transform-origin:0 0">zh-CN</div></div>
<div class="a" style="left:445px;top:169px;width:691px;height:2px;background:#b4b4b4"></div>
<div class="a" style="left:445px;top:171px;width:673px;height:646px;overflow:hidden">
<div class="a" style="left:66px;top:-6.0px;width:490px;height:32.0px;background:#fff;border:1.3px solid #ababab;border-left-width:1.8px"></div>
<div class="t" style="left:10.59px;top:3px;font-size:16px;color:#000;transform:scaleX(0.91);transform-origin:0 0;">en-US</div>
<div class="t" style="left:72.36px;top:3px;font-size:16px;color:#000;transform:scaleX(0.938);transform-origin:0 0;">Part of diving equipment that allows you to see clearly underwater</div>
<div class="a" style="left:564px;top:5.0px;width:17px;height:17px;background:#fff;border:1px solid #bcbcbc"></div>
<div class="t" style="left:586.87px;top:6px;font-size:16px;color:#000;transform:scaleX(0.934);transform-origin:0 0;">Approved</div>
<div class="a" style="left:66px;top:35.0px;width:490px;height:31.7px;background:#fff;border:1.3px solid #ababab;border-left-width:1.8px"></div>
<div class="t" style="left:10.59px;top:44px;font-size:16px;color:#000;transform:scaleX(0.91);transform-origin:0 0;">es-ES</div>
<div class="t" style="left:72.37px;top:44px;font-size:16px;color:#000;transform:scaleX(0.933);transform-origin:0 0;">Parte del equipo de buceo que permite ver claramente bajo el agua.</div>
<div class="a" style="left:564px;top:46.0px;width:17px;height:17px;background:#fff;border:1px solid #bcbcbc"></div>
<div class="t" style="left:586.87px;top:47px;font-size:16px;color:#000;transform:scaleX(0.934);transform-origin:0 0;">Approved</div>
<div class="a" style="left:66px;top:76.3px;width:490px;height:51.5px;background:#fff;border:1.3px solid #ababab;border-left-width:1.8px"></div>
<div class="t" style="left:10.59px;top:85px;font-size:16px;color:#000;transform:scaleX(0.91);transform-origin:0 0;">id-ID</div>
<div class="t" style="left:72.37px;top:85px;font-size:16px;color:#000;transform:scaleX(0.933);transform-origin:0 0;">Bagian dari perlengkapan menyelam yang memungkinkan Anda melihat</div>
<div class="t" style="left:72.38px;top:105px;font-size:16px;color:#000;transform:scaleX(0.919);transform-origin:0 0;">dengan jelas di bawah air</div>
<div class="a" style="left:564px;top:87.3px;width:17px;height:17px;background:#fff;border:1px solid #bcbcbc"></div>
<div class="t" style="left:586.87px;top:89px;font-size:16px;color:#000;transform:scaleX(0.934);transform-origin:0 0;">Approved</div>
<div class="a" style="left:66px;top:136.2px;width:490px;height:50.8px;background:#fff;border:1.3px solid #ababab;border-left-width:1.8px"></div>
<div class="t" style="left:10.59px;top:145px;font-size:16px;color:#000;transform:scaleX(0.91);transform-origin:0 0;">it-IT</div>
<div class="t" style="left:72.38px;top:145px;font-size:16px;color:#000;transform:scaleX(0.92);transform-origin:0 0;">Parte dell'attrezzatura subacquea che consente di vedere chiaramente</div>
<div class="t" style="left:72.38px;top:165px;font-size:16px;color:#000;transform:scaleX(0.924);transform-origin:0 0;">sott'acqua</div>
<div class="a" style="left:564px;top:147.2px;width:17px;height:17px;background:#fff;border:1px solid #bcbcbc"></div>
<div class="t" style="left:586.87px;top:149px;font-size:16px;color:#000;transform:scaleX(0.934);transform-origin:0 0;">Approved</div>
<div class="a" style="left:66px;top:196.5px;width:490px;height:31.1px;background:#fff;border:1.3px solid #ababab;border-left-width:1.8px"></div>
<div class="t" style="left:10.59px;top:205px;font-size:16px;color:#000;transform:scaleX(0.91);transform-origin:0 0;">ja-JP</div>
<div class="t" style="left:72.49px;top:206px;font-size:14.5px;color:#000;transform:scaleX(0.806);transform-origin:0 0;">水中をはっきりと見ることができるダイビング用具の一部</div>
<div class="a" style="left:564px;top:207.5px;width:17px;height:17px;background:#fff;border:1px solid #bcbcbc"></div>
<div class="t" style="left:586.87px;top:209px;font-size:16px;color:#000;transform:scaleX(0.934);transform-origin:0 0;">Approved</div>
<div class="a" style="left:66px;top:237.0px;width:490px;height:33.3px;background:#fff;border:1.3px solid #ababab;border-left-width:1.8px"></div>
<div class="t" style="left:10.59px;top:246px;font-size:16px;color:#000;transform:scaleX(0.91);transform-origin:0 0;">ko-KR</div>
<div class="t" style="left:72.30px;top:247px;font-size:14.5px;color:#000;">수중을 선명하게 볼 수 있게 해주는 다이빙 장비의 일부</div>
<div class="a" style="left:564px;top:248.0px;width:17px;height:17px;background:#fff;border:1px solid #bcbcbc"></div>
<div class="t" style="left:586.87px;top:249px;font-size:16px;color:#000;transform:scaleX(0.934);transform-origin:0 0;">Approved</div>
<div class="a" style="left:66px;top:278.4px;width:490px;height:51.8px;background:#fff;border:1.3px solid #ababab;border-left-width:1.8px"></div>
<div class="t" style="left:10.59px;top:288px;font-size:16px;color:#000;transform:scaleX(0.91);transform-origin:0 0;">ms-MY</div>
<div class="t" style="left:72.38px;top:288px;font-size:16px;color:#000;transform:scaleX(0.924);transform-origin:0 0;">Sebahagian daripada peralatan menyelam yang membolehkan anda</div>
<div class="t" style="left:72.37px;top:308px;font-size:16px;color:#000;transform:scaleX(0.93);transform-origin:0 0;">melihat dengan jelas di bawah air</div>
<div class="a" style="left:564px;top:289.4px;width:17px;height:17px;background:#fff;border:1px solid #bcbcbc"></div>
<div class="t" style="left:586.87px;top:291px;font-size:16px;color:#000;transform:scaleX(0.934);transform-origin:0 0;">Approved</div>
<div class="a" style="left:66px;top:338.6px;width:490px;height:32.0px;background:#fff;border:1.3px solid #ababab;border-left-width:1.8px"></div>
<div class="t" style="left:10.59px;top:348px;font-size:16px;color:#000;transform:scaleX(0.91);transform-origin:0 0;">pl-PL</div>
<div class="t" style="left:72.38px;top:348px;font-size:16px;color:#000;transform:scaleX(0.924);transform-origin:0 0;">Część sprzętu nurkowego, która pozwala wyraźnie widzieć pod wodą</div>
<div class="a" style="left:564px;top:349.6px;width:17px;height:17px;background:#fff;border:1px solid #bcbcbc"></div>
<div class="t" style="left:586.87px;top:351px;font-size:16px;color:#000;transform:scaleX(0.934);transform-origin:0 0;">Approved</div>
<div class="a" style="left:66px;top:380.4px;width:490px;height:51.1px;background:#fff;border:1.3px solid #ababab;border-left-width:1.8px"></div>
<div class="t" style="left:10.59px;top:389px;font-size:16px;color:#000;transform:scaleX(0.91);transform-origin:0 0;">ru-RU</div>
<div class="t" style="left:72.37px;top:389px;font-size:16px;color:#000;transform:scaleX(0.932);transform-origin:0 0;">Часть водолазного снаряжения, позволяющая четко видеть под</div>
<div class="t" style="left:72.33px;top:409px;font-size:16px;color:#000;transform:scaleX(0.967);transform-origin:0 0;">водой.</div>
<div class="a" style="left:564px;top:391.4px;width:17px;height:17px;background:#fff;border:1px solid #bcbcbc"></div>
<div class="t" style="left:586.87px;top:393px;font-size:16px;color:#000;transform:scaleX(0.934);transform-origin:0 0;">Approved</div>
<div class="a" style="left:66px;top:440.6px;width:490px;height:50.6px;background:#fff;border:1.3px solid #ababab;border-left-width:1.8px"></div>
<div class="t" style="left:10.59px;top:449px;font-size:16px;color:#000;transform:scaleX(0.91);transform-origin:0 0;">tl-PH</div>
<div class="t" style="left:72.36px;top:449px;font-size:16px;color:#000;transform:scaleX(0.94);transform-origin:0 0;">Bahagi ng diving equipment na nagbibigay-daan sa iyong makakita ng</div>
<div class="t" style="left:72.36px;top:469px;font-size:16px;color:#000;transform:scaleX(0.943);transform-origin:0 0;">malinaw sa ilalim ng tubig</div>
<div class="a" style="left:564px;top:451.6px;width:17px;height:17px;background:#fff;border:1px solid #bcbcbc"></div>
<div class="t" style="left:586.87px;top:453px;font-size:16px;color:#000;transform:scaleX(0.934);transform-origin:0 0;">Approved</div>
<div class="a" style="left:66px;top:500.2px;width:490px;height:31.3px;background:#fffde1;border:1.3px solid #ababab;border-left-width:1.8px"></div>
<div class="t" style="left:10.59px;top:509px;font-size:16px;color:#000;transform:scaleX(0.91);transform-origin:0 0;">tr-TR</div>
<div class="t" style="left:72.38px;top:509px;font-size:16px;color:#000;transform:scaleX(0.918);transform-origin:0 0;">Su altında net bir şekilde görmenizi sağlayan dalış ekipmanının parçası</div>
<div class="a" style="left:564px;top:511.2px;width:17px;height:17px;background:#fff;border:1px solid #bcbcbc"></div>
<div class="t" style="left:586.87px;top:513px;font-size:16px;color:#000;transform:scaleX(0.934);transform-origin:0 0;">Approved</div>
<div class="a" style="left:66px;top:540.8px;width:490px;height:51.3px;background:#fff;border:1.3px solid #ababab;border-left-width:1.8px"></div>
<div class="t" style="left:10.59px;top:550px;font-size:16px;color:#000;transform:scaleX(0.91);transform-origin:0 0;">uk-UA</div>
<div class="t" style="left:72.37px;top:550px;font-size:16px;color:#000;transform:scaleX(0.932);transform-origin:0 0;">Частина водолазного спорядження, яка дозволяє чітко бачити під</div>
<div class="t" style="left:72.34px;top:570px;font-size:16px;color:#000;transform:scaleX(0.96);transform-origin:0 0;">водою</div>
<div class="a" style="left:564px;top:551.8px;width:17px;height:17px;background:#fff;border:1px solid #bcbcbc"></div>
<div class="t" style="left:586.87px;top:553px;font-size:16px;color:#000;transform:scaleX(0.934);transform-origin:0 0;">Approved</div>
<div class="a" style="left:66px;top:601.1px;width:490px;height:34.3px;background:#fff;border:1.3px solid #ababab;border-left-width:1.8px"></div>
<div class="t" style="left:10.59px;top:610px;font-size:16px;color:#000;transform:scaleX(0.91);transform-origin:0 0;">zh-CN</div>
<div class="t" style="left:72.31px;top:611px;font-size:14.5px;color:#000;transform:scaleX(0.985);transform-origin:0 0;">潜水设备的一部分，可让您在水下看得清楚</div>
<div class="a" style="left:564px;top:612.1px;width:17px;height:17px;background:#fff;border:1px solid #bcbcbc"></div>
<div class="t" style="left:586.87px;top:614px;font-size:16px;color:#000;transform:scaleX(0.934);transform-origin:0 0;">Approved</div>
</div>
<div class="a" style="left:981px;top:677px;width:1.2px;height:20px;background:#000"></div>
<svg style="left:0px;top:0px" width="1136" height="1010" viewBox="0 0 1136 1010"><path d="M517.8 434 L519.3 433 L520.8 434 L522.3 433 L523.8 434 L525.3 433 L526.8 434 L528.3 433 L529.8 434 L531.3 433 L532.8 434 L534.3 433 L535.8 434 L537.3 433 L538.8 434 L540.3 433 L541.8 434 L543.3 433 L544.8 434 L546.3 433 L547.8 434 L549.3 433 L550.8 434 L552.3 433 L553.8 434 L555.3 433 L556.8 434 L558.3 433 L559.8 434 L561.3 433 L562.8 434M568 434 L569.5 433 L571.0 434 L572.5 433 L574.0 434 L575.5 433 L577.0 434 L578.5 433 L580.0 434 L581.5 433 L583.0 434 L584.5 433 L586.0 434 L587.5 433 L589.0 434 L590.5 433 L592.0 434 L593.5 433 L595.0 434 L596.5 433 L598.0 434 L599.5 433 L601.0 434 L602.5 433 L604.0 434 L605.5 433 L607.0 434 L608.5 433 L610.0 434 L611.5 433 L613.0 434 L614.5 433 L616.0 434 L617.5 433 L619.0 434 L620.5 433 L622.0 434 L623.5 433 L625.0 434 L626.5 433 L628.0 434 L629.5 433 L631.0 434 L632.5 433 L634.0 434 L635.5 433 L637.0 434 L638.5 433 L640.0 434 L641.5 433 L643.0 434 L644.5 433 L646.0 434M648.6 434 L650.1 433 L651.6 434 L653.1 433 L654.6 434 L656.1 433 L657.6 434 L659.1 433 L660.6 434M664.7 434 L666.2 433 L667.7 434 L669.2 433 L670.7 434 L672.2 433 L673.7 434 L675.2 433 L676.7 434M680 434 L681.5 433 L683.0 434 L684.5 433 L686.0 434 L687.5 433 L689.0 434 L690.5 433 L692.0 434 L693.5 433 L695.0 434 L696.5 433 L698.0 434 L699.5 433M703.9 434 L705.4 433 L706.9 434 L708.4 433 L709.9 434 L711.4 433 L712.9 434 L714.4 433 L715.9 434 L717.4 433 L718.9 434 L720.4 433 L721.9 434 L723.4 433 L724.9 434 L726.4 433 L727.9 434 L729.4 433 L730.9 434 L732.4 433 L733.9 434 L735.4 433 L736.9 434 L738.4 433 L739.9 434 L741.4 433 L742.9 434 L744.4 433 L745.9 434 L747.4 433 L748.9 434M751.8 434 L753.3 433 L754.8 434 L756.3 433 L757.8 434 L759.3 433 L760.8 434 L762.3 433 L763.8 434 L765.3 433 L766.8 434 L768.3 433 L769.8 434 L771.3 433 L772.8 434 L774.3 433 L775.8 434 L777.3 433 L778.8 434 L780.3 433 L781.8 434 L783.3 433 L784.8 434 L786.3 433 L787.8 434 L789.3 433 L790.8 434 L792.3 433 L793.8 434 L795.3 433 L796.8 434 L798.3 433M802 434 L803.5 433 L805.0 434 L806.5 433 L808.0 434 L809.5 433 L811.0 434 L812.5 433 L814.0 434 L815.5 433 L817.0 434 L818.5 433 L820.0 434 L821.5 433 L823.0 434 L824.5 433 L826.0 434 L827.5 433 L829.0 434 L830.5 433 L832.0 434 L833.5 433 L835.0 434 L836.5 433 L838.0 434 L839.5 433 L841.0 434 L842.5 433 L844.0 434 L845.5 433M849.9 434 L851.4 433 L852.9 434 L854.4 433 L855.9 434 L857.4 433 L858.9 434 L860.4 433 L861.9 434 L863.4 433 L864.9 434 L866.4 433 L867.9 434 L869.4 433 L870.9 434 L872.4 433 L873.9 434 L875.4 433 L876.9 434 L878.4 433 L879.9 434 L881.4 433M517.8 535 L519.3 534 L520.8 535 L522.3 534 L523.8 535 L525.3 534 L526.8 535 L528.3 534 L529.8 535 L531.3 534 L532.8 535 L534.3 534 L535.8 535 L537.3 534 L538.8 535 L540.3 534 L541.8 535 L543.3 534 L544.8 535 L546.3 534 L547.8 535 L549.3 534M558.8 535 L560.3 534 L561.8 535 L563.3 534 L564.8 535 L566.3 534 L567.8 535 L569.3 534 L570.8 535 L572.3 534 L573.8 535 L575.3 534 L576.8 535 L578.3 534 L579.8 535 L581.3 534 L582.8 535 L584.3 534 L585.8 535 L587.3 534 L588.8 535 L590.3 534 L591.8 535 L593.3 534 L594.8 535 L596.3 534 L597.8 535 L599.3 534 L600.8 535 L602.3 534 L603.8 535 L605.3 534 L606.8 535 L608.3 534M791 535 L792.5 534 L794.0 535 L795.5 534 L797.0 535 L798.5 534 L800.0 535 L801.5 534 L803.0 535 L804.5 534 L806.0 535 L807.5 534 L809.0 535 L810.5 534 L812.0 535 L813.5 534 L815.0 535 L816.5 534 L818.0 535 L819.5 534 L821.0 535 L822.5 534 L824.0 535 L825.5 534 L827.0 535 L828.5 534 L830.0 535 L831.5 534 L833.0 535 L834.5 534 L836.0 535 L837.5 534M852 535 L853.5 534 L855.0 535 L856.5 534 L858.0 535 L859.5 534 L861.0 535 L862.5 534 L864.0 535 L865.5 534 L867.0 535 L868.5 534 L870.0 535 L871.5 534 L873.0 535 L874.5 534 L876.0 535 L877.5 534 L879.0 535 L880.5 534 L882.0 535 L883.5 534 L885.0 535 L886.5 534 L888.0 535 L889.5 534 L891.0 535 L892.5 534 L894.0 535 L895.5 534 L897.0 535 L898.5 534 L900.0 535" fill="none" stroke="#e46a6a" stroke-width="0.8"/></svg>
<div class="a" style="left:1118px;top:171px;width:17px;height:646px;background:#e6e6e6"></div>
<div class="a" style="left:1118px;top:171px;width:17px;height:16px;background:#f7f7f7;border-bottom:1px solid #d0d0d0"></div>
<div class="a" style="left:1118px;top:380px;width:17px;height:33px;background:#fbfbfb;border-bottom:1px solid #d0d0d0;border-top:1px solid #f0f0f0"></div>
<div class="a" style="left:1118px;top:798px;width:17px;height:18px;background:#f7f7f7;border-top:1px solid #d0d0d0"></div>
<svg style="left:0px;top:0px" width="1136" height="1010" viewBox="0 0 1136 1010"><path d="M1121.7 182.5H1131L1126.35 177.8Z" fill="#555"/><path d="M1121.7 804.5H1131L1126.35 809.2Z" fill="#555"/></svg>
<div class="a" style="left:445px;top:816px;width:691px;height:2px;background:#a9a9a9"></div>
<div class="a" style="left:445px;top:818.5px;width:691px;height:30px;background:#f0f0f0"></div>
<div class="a" style="left:445px;top:848px;width:691px;height:1px;background:#c4c4c4"></div>
<div class="a" style="left:445px;top:849px;width:691px;height:128px;background:#fff"></div>
<div class="t" style="left:453.27px;top:826px;font-size:16px;color:#000;transform:scaleX(0.93);transform-origin:0 0;">Machine Translation</div>
<div class="t" style="left:883.05px;top:826px;font-size:16px;color:#000;transform:scaleX(0.948);transform-origin:0 0;"><span style="text-decoration:underline;text-underline-offset:2px;text-decoration-skip-ink:none">Google</span></div>
<div class="t" style="left:944.52px;top:826px;font-size:16px;color:#000;transform:scaleX(0.883);transform-origin:0 0;">DeepL</div>
<div class="t" style="left:999.64px;top:826px;font-size:16px;color:#000;transform:scaleX(0.96);transform-origin:0 0;">Microsoft</div>
<div class="t" style="left:1075.56px;top:826px;font-size:16px;color:#000;transform:scaleX(0.944);transform-origin:0 0;">OpenAI</div>
<div class="a" style="left:937.6px;top:822px;width:1.2px;height:21.5px;background:#b0b0b0"></div>
<div class="a" style="left:992.9px;top:822px;width:1.2px;height:21.5px;background:#b0b0b0"></div>
<div class="a" style="left:1068.8px;top:822px;width:1.2px;height:21.5px;background:#b0b0b0"></div>
<div class="t" style="left:453.96px;top:859px;font-size:14px;color:#a3a3a3;transform:scaleX(0.94);transform-origin:0 0;">Ctrl+1</div>
<div class="t" style="left:504.78px;top:857px;font-size:16px;color:#000;transform:scaleX(0.92);transform-origin:0 0;">Su altında net bir şekilde görmenizi sağlayan dalış ekipmanının parçası</div>
<div class="t" style="left:1005.28px;top:861px;font-size:13px;color:#757575;transform:scaleX(0.917);transform-origin:0 0;">translated by</div>
<div class="t" style="left:1079.05px;top:857px;font-size:16.5px;color:#5f6368;transform:scaleX(0.95);transform-origin:0 0;">Google</div>
<div class="a" style="left:0;top:977px;width:1136px;height:1px;background:#8e8e8e"></div>
<div class="a" style="left:0;top:978px;width:1136px;height:32px;background:#e3e3e3"></div>
<svg style="left:0px;top:0px" width="1136" height="1010" viewBox="0 0 1136 1010"><g fill="#fbfbfb" stroke="#737373" stroke-width="1.35" stroke-linejoin="round"><path d="M1052.8 987.4H1066.6a2.2 2.2 0 0 1 2.2 2.2V996.6a2.2 2.2 0 0 1-2.2 2.2H1062L1059.5 1001.6L1057 998.8H1052.8a2.2 2.2 0 0 1-2.2-2.2V989.6a2.2 2.2 0 0 1 2.2-2.2Z"/><path d="M1086 987.4H1099.6a2.2 2.2 0 0 1 2.2 2.2V996.6a2.2 2.2 0 0 1-2.2 2.2H1095.1L1092.6 1001.6L1090.1 998.8H1086a2.2 2.2 0 0 1-2.2-2.2V989.6a2.2 2.2 0 0 1 2.2-2.2Z"/></g><path d="M1054 992.2q1.5-2.2 3.2-1.2t3 0.6t3-1.6M1054 995.8q1.5-2.2 3.2-1.2t3 0.6t3-1.6" fill="none" stroke="#737373" stroke-width="1.3"/><path d="M1092.6 988.6l1.5 3 3.3 0.3-2.5 2.2 0.8 3.2-3.1-1.8-3.1 1.8 0.8-3.2-2.5-2.2 3.3-0.3z" fill="#737373"/></svg>
<svg style="left:0px;top:0px" width="1136" height="1010" viewBox="0 0 1136 1010"><rect x="1131" y="996" width="1.2" height="1.2" fill="#b5b5b5"/><rect x="1131" y="1000" width="1.2" height="1.2" fill="#b5b5b5"/><rect x="1131" y="1004" width="1.2" height="1.2" fill="#b5b5b5"/><rect x="1127" y="1000" width="1.2" height="1.2" fill="#b5b5b5"/><rect x="1127" y="1004" width="1.2" height="1.2" fill="#b5b5b5"/><rect x="1123" y="1004" width="1.2" height="1.2" fill="#b5b5b5"/><rect x="1127" y="1008" width="1.2" height="1.2" fill="#b5b5b5"/><rect x="1123" y="1008" width="1.2" height="1.2" fill="#b5b5b5"/><rect x="1119" y="1008" width="1.2" height="1.2" fill="#b5b5b5"/></svg>
<div class="a" style="left:1135px;top:38px;width:1px;height:972px;background:#048083"></div>
<svg style="left:0px;top:0px" width="1136" height="1010" viewBox="0 0 1136 1010"><path d="M1135.5 996 Q1135.5 1008 1128 1010.5" fill="none" stroke="#048083" stroke-width="1.2"/><path d="M0 1000 Q2 1008 8 1010.5" fill="none" stroke="#048083" stroke-width="1.2"/></svg>
</div></body></html>
